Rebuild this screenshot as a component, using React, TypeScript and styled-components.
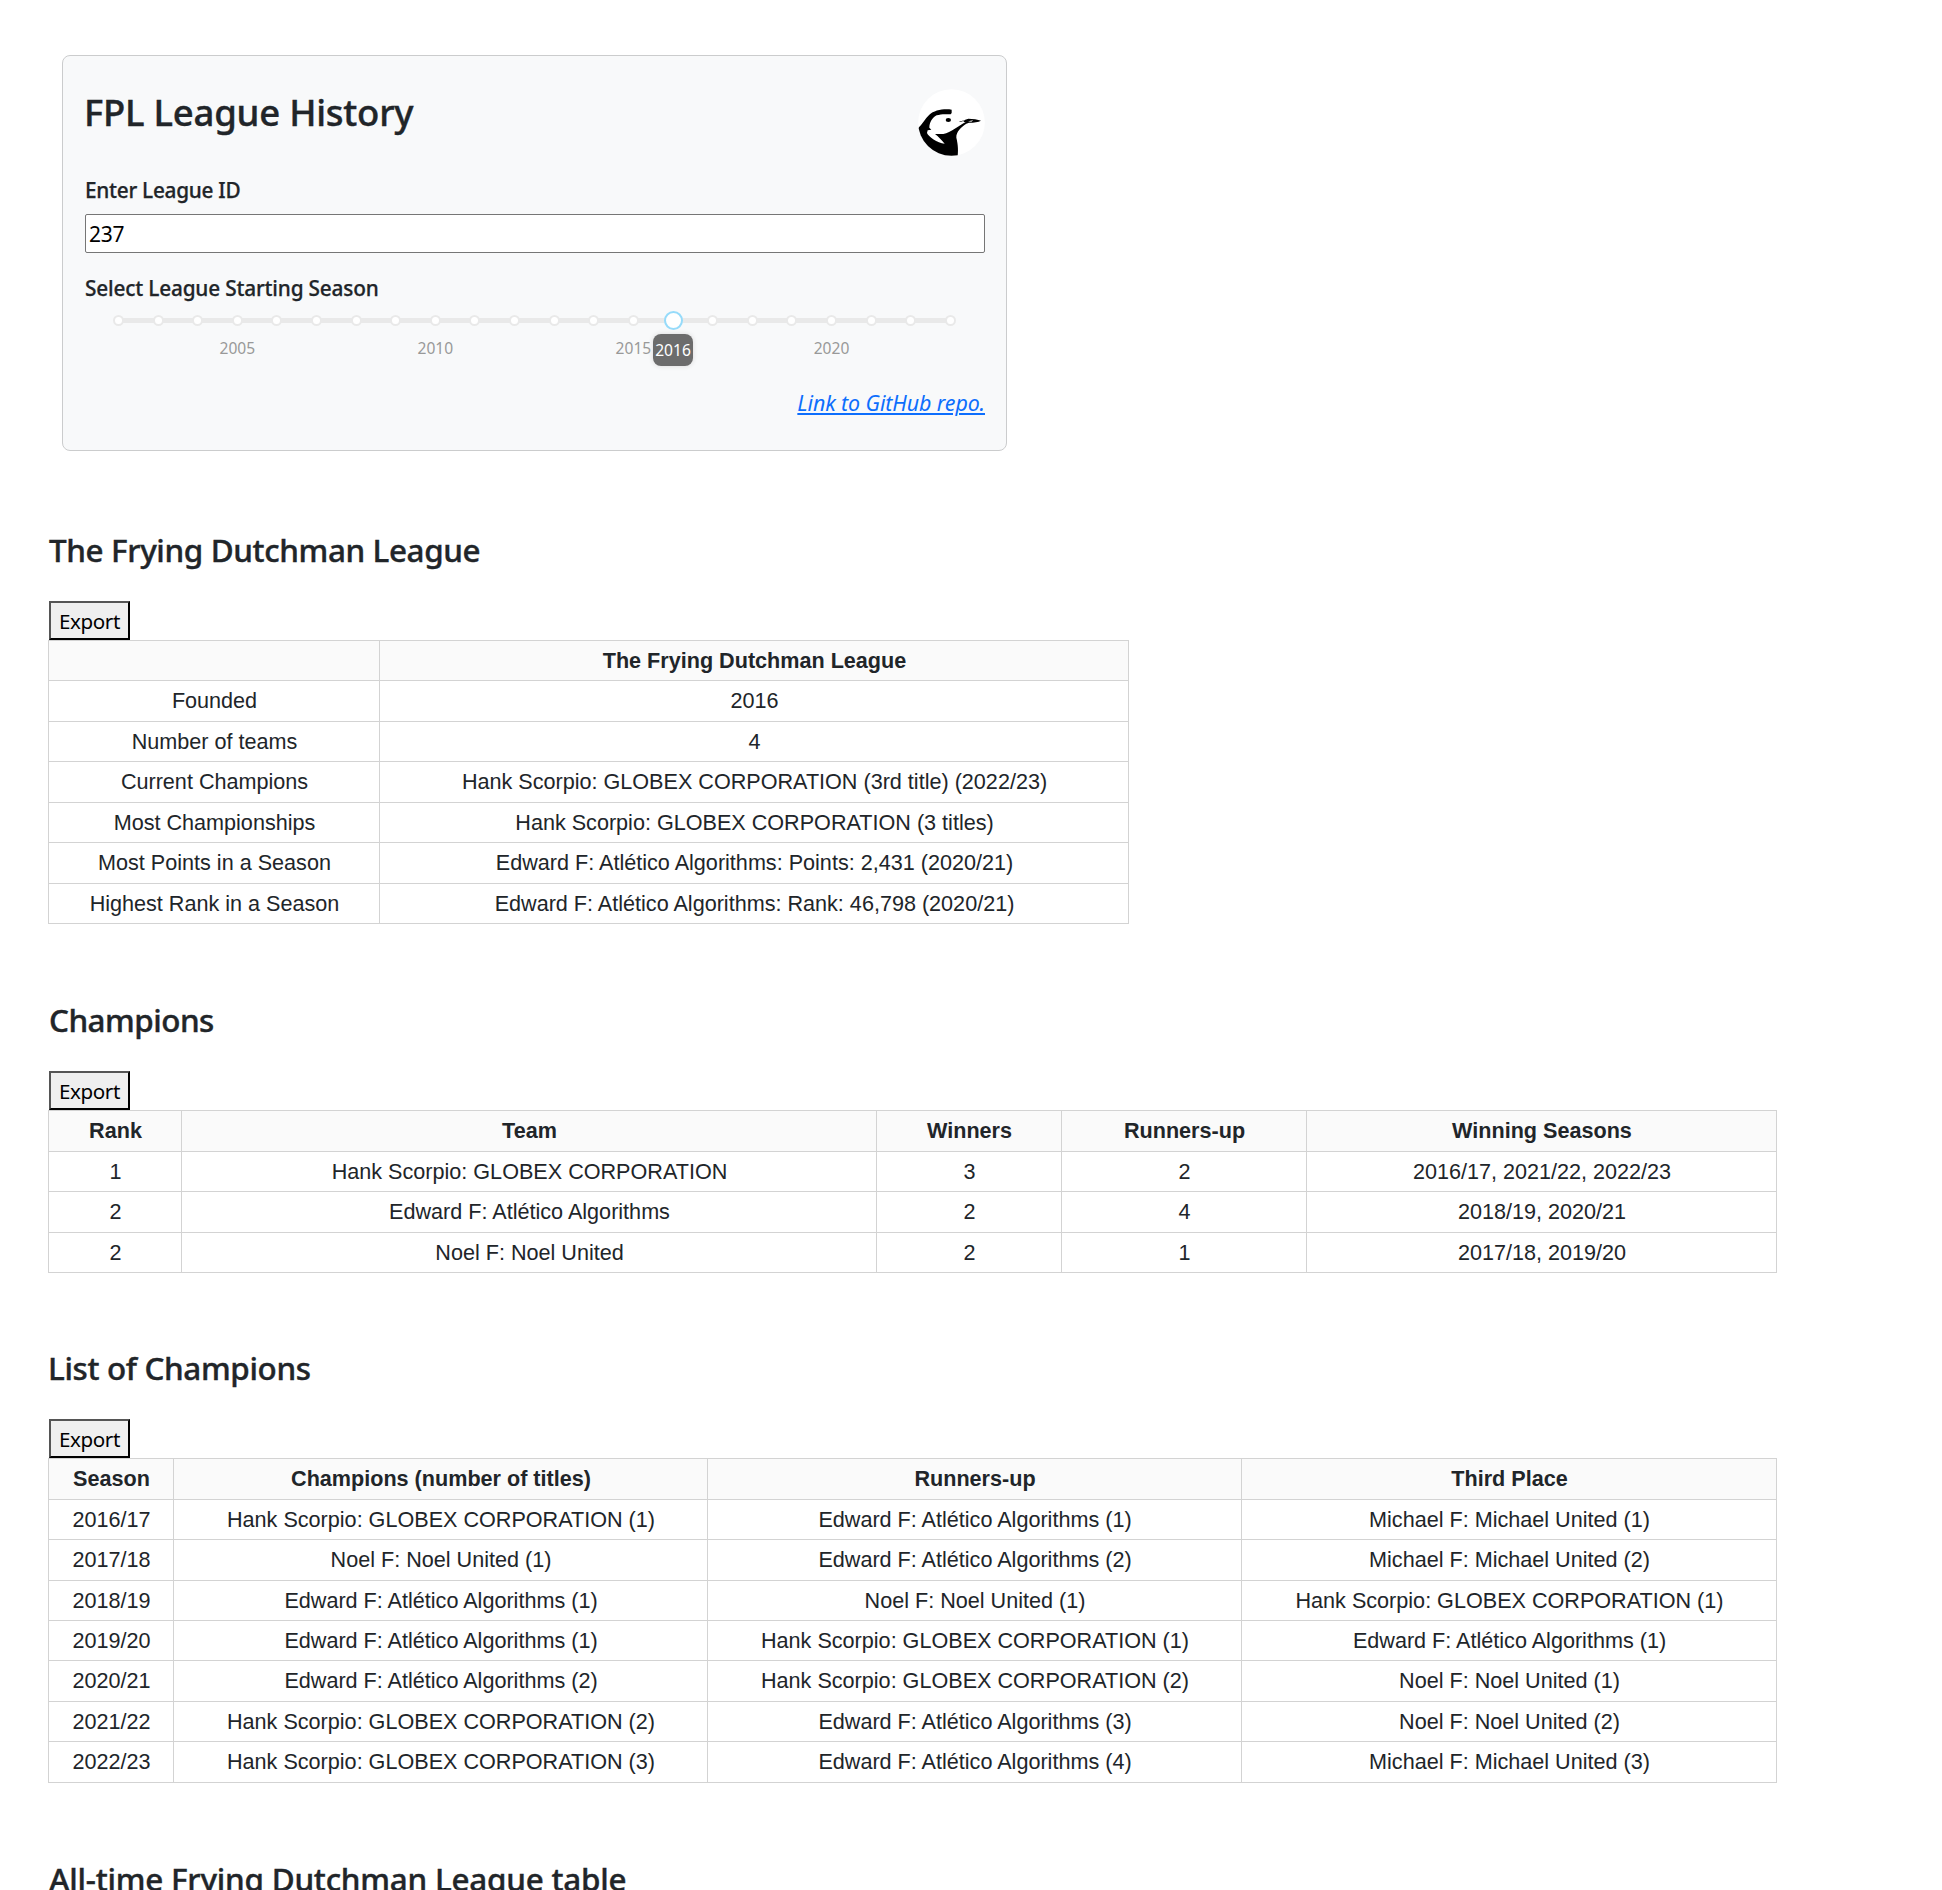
import React from 'react';
import styled, { createGlobalStyle, css } from 'styled-components';

const uiFont = css`
  font-family: 'Noto Sans', 'Open Sans', sans-serif;
`;

const GlobalStyle = createGlobalStyle`
  *, *::before, *::after { box-sizing: border-box; }
  html, body { margin: 0; padding: 0; background: #fff; }
  body {
    height: 1890px;
    overflow: hidden;
    color: #212529;
    font-family: 'Noto Sans', 'Open Sans', sans-serif;
  }
`;

const Page = styled.main`
  display: flex;
  flex-direction: column;
  align-items: flex-start;
  height: 1890px;
  overflow: hidden;
  padding: 55px 0 0 49px;
`;

const Card = styled.section`
  flex: none;
  width: 945px;
  height: 396px;
  margin-left: 13px;
  padding: 33px 21px 0 22px;
  border: 1px solid #cbcccd;
  border-radius: 8px;
  background: #f8f9fa;
`;

const CardHeader = styled.header`
  display: flex;
  justify-content: space-between;
  align-items: flex-start;
  height: 67px;
  margin-bottom: 18px;
`;

const Title = styled.h1`
  margin: 1px 0 0 -1px;
  font-size: 36.5px;
  line-height: 44px;
  font-weight: 500;
  letter-spacing: -0.24px;
  -webkit-text-stroke: 0.4px currentColor;
`;

const Logo = styled.svg`
  display: block;
  width: 67px;
  height: 67px;
`;

const Label = styled.label<{ $spacing: number }>`
  display: block;
  font-size: 20.8px;
  line-height: 32px;
  font-weight: 500;
  letter-spacing: ${(p) => p.$spacing}px;
  -webkit-text-stroke: 0.25px currentColor;
`;

const LeagueInput = styled.input`
  ${uiFont}
  display: block;
  width: 900px;
  height: 39px;
  margin: 8px 0 19px;
  padding: 0 3px;
  border: 1px solid #767676;
  border-radius: 2px;
  background: #fff;
  color: #000;
  font-size: 21px;
  letter-spacing: -0.2px;
  outline: none;
`;

const Slider = styled.div`
  height: 83px;
  padding: 11px 29px 0 28px;
`;

const Track = styled.div`
  display: flex;
  justify-content: space-between;
  align-items: center;
  height: 11px;
  background: linear-gradient(#e9e9e9, #e9e9e9) center / calc(100% - 6px) 5px no-repeat;
`;

const Stop = styled.div`
  position: relative;
  width: 11px;
  height: 11px;
  border: 2px solid #e9e9e9;
  border-radius: 50%;
  background: #fff;
`;

const Mark = styled.span`
  position: absolute;
  top: 20px;
  left: 50%;
  transform: translateX(-50%);
  color: #999;
  font-size: 15.6px;
  line-height: 22px;
`;

const Handle = styled.span`
  position: absolute;
  z-index: 1;
  top: -6px;
  left: -6px;
  width: 19px;
  height: 19px;
  border: 2px solid #96dbfa;
  border-radius: 50%;
  background: #fff;
`;

const Tooltip = styled.span`
  position: absolute;
  z-index: 1;
  top: 17px;
  left: 50%;
  width: 40px;
  height: 32px;
  transform: translateX(-50%);
  border-radius: 8px;
  background: #6c6c6c;
  box-shadow: 0 0 5px #d9d9d9;
  color: #fff;
  font-size: 15.6px;
  line-height: 32px;
  text-align: center;
`;

const RepoLine = styled.div`
  display: flex;
  justify-content: flex-end;
`;

const RepoLink = styled.a`
  color: #0d6efd;
  font-size: 21.4px;
  line-height: 32px;
  font-style: italic;
  letter-spacing: -0.1px;
  text-decoration: underline;
  text-decoration-thickness: 2px;
  text-underline-offset: 2px;
`;

const Section = styled.section<{ $gap: number }>`
  display: flex;
  flex: none;
  flex-direction: column;
  align-items: flex-start;
  margin-top: ${(p) => p.$gap}px;
`;

const Heading = styled.h2<{ $spacing: number; $shift?: number }>`
  margin: 0 0 31px ${(p) => p.$shift ?? 0}px;
  font-size: 31.4px;
  line-height: 40px;
  font-weight: 500;
  letter-spacing: ${(p) => p.$spacing}px;
  white-space: nowrap;
  -webkit-text-stroke: 0.4px currentColor;
`;

const ExportButton = styled.button`
  ${uiFont}
  width: 81px;
  height: 39px;
  padding: 1px 0 0;
  border: 2px solid;
  border-color: #555 #000 #000 #555;
  border-radius: 0;
  background: #efefef;
  color: #000;
  font-size: 20.6px;
  line-height: 35px;
  letter-spacing: -0.4px;
`;

const Table = styled.table`
  margin-left: -1px;
  border-spacing: 0;
  border-collapse: separate;
  table-layout: fixed;
  border-top: 1px solid #d3d3d3;
  border-left: 1px solid #d3d3d3;
  font-family: 'Liberation Sans', Arial, sans-serif;
  font-size: 21.6px;
  line-height: 39px;
  text-align: center;
`;

const Col = styled.col<{ $width: number }>`
  width: ${(p) => p.$width}px;
`;

const Row = styled.tr<{ $height: number }>`
  height: ${(p) => p.$height}px;
`;

const cell = css`
  padding: 0 0 0 1px;
  overflow: hidden;
  border-right: 1px solid #d3d3d3;
  border-bottom: 1px solid #d3d3d3;
  vertical-align: top;
  white-space: nowrap;
`;

const HeadCell = styled.th`
  ${cell}
  background: #fafafa;
  font-weight: 700;
`;

const Cell = styled.td`
  ${cell}
`;

const FIRST_YEAR = 2002;
const LAST_YEAR = 2023;
const SELECTED_YEAR = 2016;
const years = Array.from({ length: LAST_YEAR - FIRST_YEAR + 1 }, (_, i) => FIRST_YEAR + i);

interface TableData {
  title: string;
  gap: number;
  spacing: number;
  shift: number;
  columns: string[];
  widths: number[];
  heights: number[];
  rows: string[][];
}

const HANK = 'Hank Scorpio: GLOBEX CORPORATION';
const EDWARD = 'Edward F: Atlético Algorithms';
const NOEL = 'Noel F: Noel United';
const MICHAEL = 'Michael F: Michael United';

const tables: TableData[] = [
  {
    title: 'The Frying Dutchman League',
    gap: 79,
    spacing: -0.37,
    shift: 0,
    columns: ['', 'The Frying Dutchman League'],
    widths: [331, 749],
    heights: [40, 41, 40, 41, 40, 41, 40],
    rows: [
      ['Founded', '2016'],
      ['Number of teams', '4'],
      ['Current Champions', `${HANK} (3rd title) (2022/23)`],
      ['Most Championships', `${HANK} (3 titles)`],
      ['Most Points in a Season', `${EDWARD}: Points: 2,431 (2020/21)`],
      ['Highest Rank in a Season', `${EDWARD}: Rank: 46,798 (2020/21)`],
    ],
  },
  {
    title: 'Champions',
    gap: 76,
    spacing: -0.5,
    shift: 0,
    columns: ['Rank', 'Team', 'Winners', 'Runners-up', 'Winning Seasons'],
    widths: [133, 695, 185, 245, 470],
    heights: [41, 40, 41, 40],
    rows: [
      ['1', HANK, '3', '2', '2016/17, 2021/22, 2022/23'],
      ['2', EDWARD, '2', '4', '2018/19, 2020/21'],
      ['2', NOEL, '2', '1', '2017/18, 2019/20'],
    ],
  },
  {
    title: 'List of Champions',
    gap: 75,
    spacing: -0.35,
    shift: -1,
    columns: ['Season', 'Champions (number of titles)', 'Runners-up', 'Third Place'],
    widths: [125, 534, 534, 535],
    heights: [41, 40, 41, 40, 40, 41, 40, 41],
    rows: [
      ['2016/17', `${HANK} (1)`, `${EDWARD} (1)`, `${MICHAEL} (1)`],
      ['2017/18', `${NOEL} (1)`, `${EDWARD} (2)`, `${MICHAEL} (2)`],
      ['2018/19', `${EDWARD} (1)`, `${NOEL} (1)`, `${HANK} (1)`],
      ['2019/20', `${EDWARD} (1)`, `${HANK} (1)`, `${EDWARD} (1)`],
      ['2020/21', `${EDWARD} (2)`, `${HANK} (2)`, `${NOEL} (1)`],
      ['2021/22', `${HANK} (2)`, `${EDWARD} (3)`, `${NOEL} (2)`],
      ['2022/23', `${HANK} (3)`, `${EDWARD} (4)`, `${MICHAEL} (3)`],
    ],
  },
];

function BirdLogo() {
  return (
    <Logo viewBox="0 0 201 201" aria-hidden="true">
      <defs>
        <clipPath id="badge">
          <circle cx="100.5" cy="100.5" r="100" />
        </clipPath>
      </defs>
      <circle cx="100.5" cy="100.5" r="100" fill="#fff" />
      <g clipPath="url(#badge)">
        <path d="M101 62C80 58 48 63 34 77C21 89 12 107 0 118V201H119C122 178 118 158 115 146C114 128 130 114 145 104L153 101C168 101 181 99 189 95C180 91 164 89 151 89L122 99L143 99C122 110 99 130 76 135L51 135C61 143 71 153 80 164C58 162 31 143 27 132L29 124L40 122L34 116C34 101 42 87 56 79C68 75 80 75 98 76L101 72Z" />
        <path d="M127 98L140 94L137 98ZM150 97L166 94L160 98Z" fill="#fff" />
        <ellipse cx="91" cy="93" rx="8" ry="6" />
      </g>
    </Logo>
  );
}

function SeasonSlider() {
  return (
    <Slider>
      <Track>
        {years.map((year) => (
          <Stop key={year}>
            {year % 5 === 0 && <Mark>{year}</Mark>}
            {year === SELECTED_YEAR && (
              <>
                <Handle />
                <Tooltip>{year}</Tooltip>
              </>
            )}
          </Stop>
        ))}
      </Track>
    </Slider>
  );
}

function LeagueTable({ data }: { data: TableData }) {
  return (
    <Section $gap={data.gap}>
      <Heading $spacing={data.spacing} $shift={data.shift}>{data.title}</Heading>
      <ExportButton type="button">Export</ExportButton>
      <Table style={{ width: data.widths.reduce((a, b) => a + b, 1) }}>
        <colgroup>
          {data.widths.map((w, i) => (
            <Col key={i} $width={w} />
          ))}
        </colgroup>
        <thead>
          <Row $height={data.heights[0]}>
            {data.columns.map((c, i) => (
              <HeadCell key={i}>{c}</HeadCell>
            ))}
          </Row>
        </thead>
        <tbody>
          {data.rows.map((row, r) => (
            <Row key={r} $height={data.heights[r + 1]}>
              {row.map((c, i) => (
                <Cell key={i}>{c}</Cell>
              ))}
            </Row>
          ))}
        </tbody>
      </Table>
    </Section>
  );
}

export default function App() {
  return (
    <>
      <GlobalStyle />
      <Page>
        <Card>
          <CardHeader>
            <Title>FPL League History</Title>
            <BirdLogo />
          </CardHeader>
          <Label htmlFor="league-id" $spacing={-0.28}>Enter League ID</Label>
          <LeagueInput id="league-id" defaultValue="237" />
          <Label as="div" $spacing={-0.18}>Select League Starting Season</Label>
          <SeasonSlider />
          <RepoLine>
            <RepoLink href="#">Link to GitHub repo.</RepoLink>
          </RepoLine>
        </Card>
        {tables.map((data) => (
          <LeagueTable key={data.title} data={data} />
        ))}
        <Section $gap={76}>
          <Heading $spacing={-0.22}>All-time Frying Dutchman League table</Heading>
        </Section>
      </Page>
    </>
  );
}
